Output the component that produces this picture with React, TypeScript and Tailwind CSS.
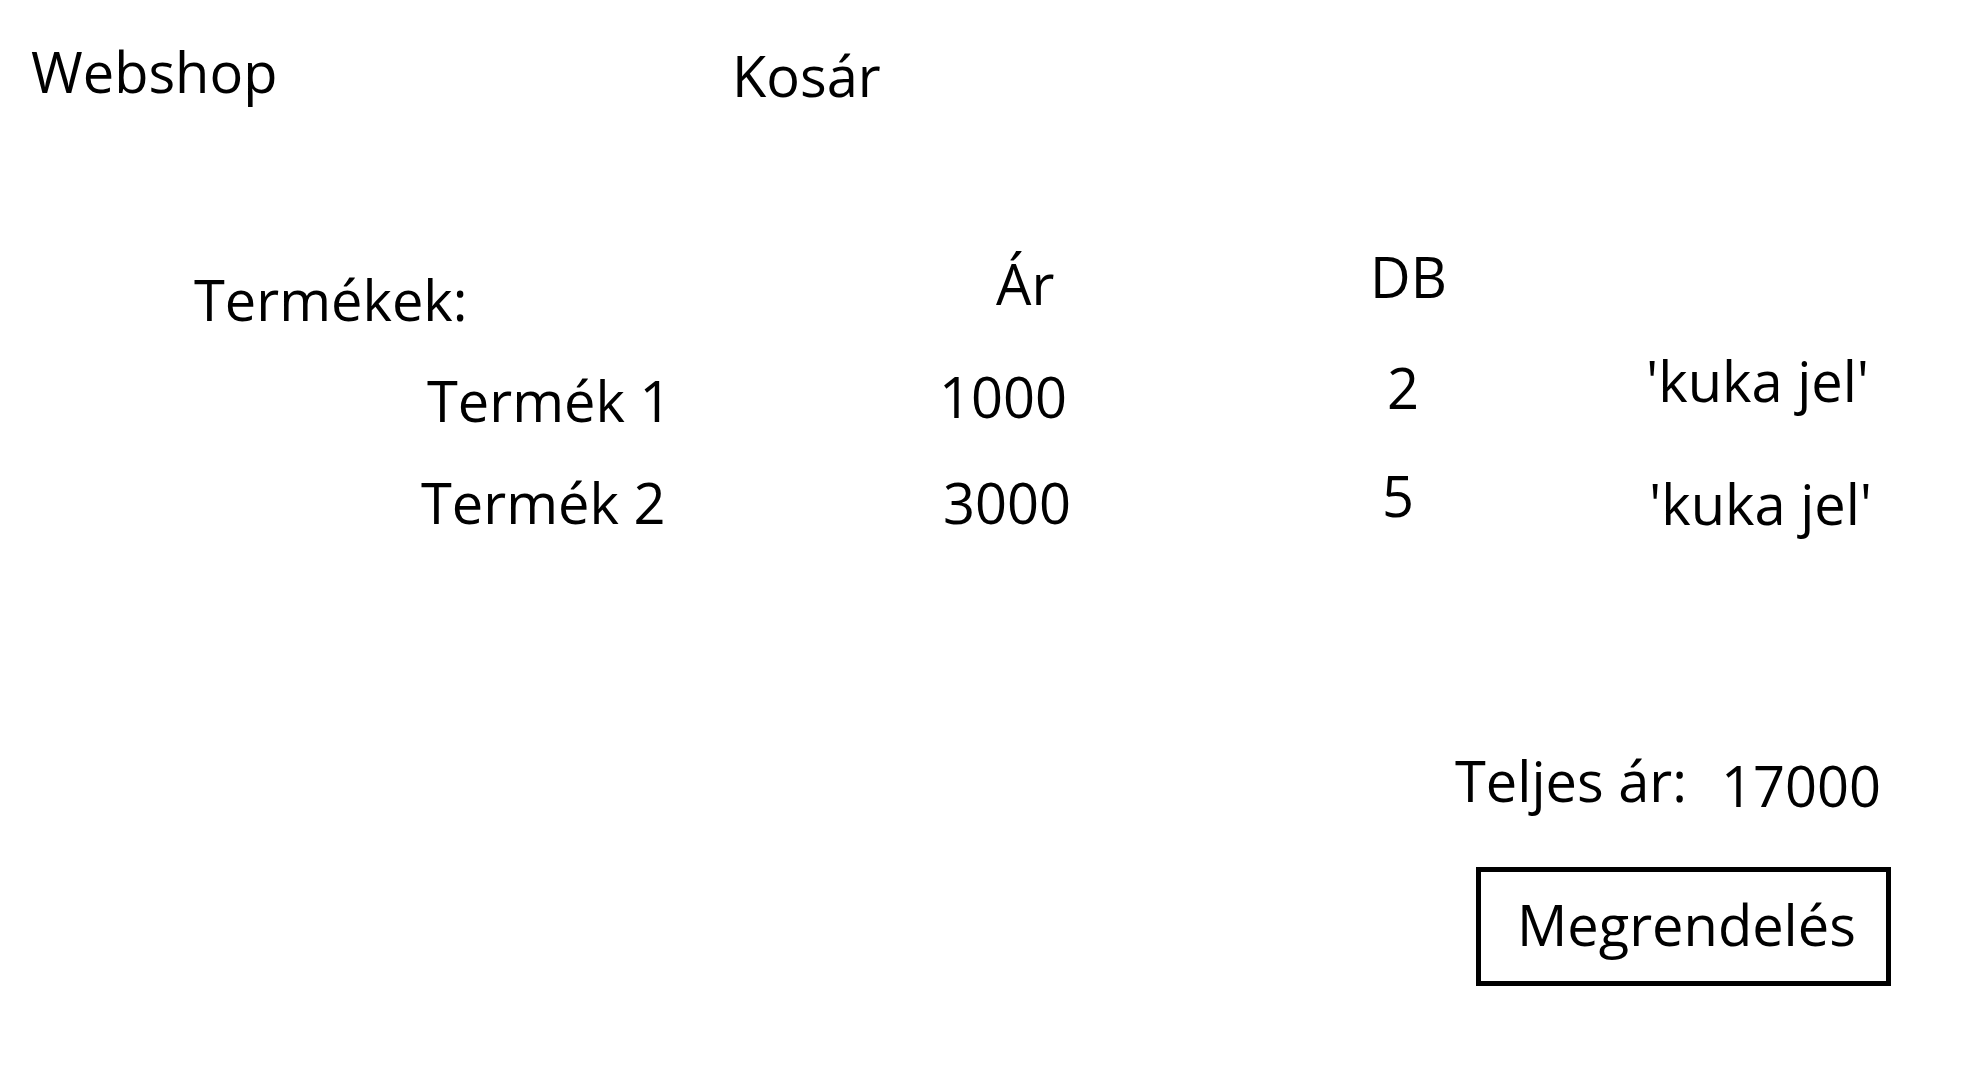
const text = "whitespace-nowrap text-[56px] font-medium leading-none text-black";

export default function App() {
  return (
    <div
      className="flex h-[1080px] w-[1980px] flex-col overflow-hidden bg-white"
      style={{ fontFamily: '"Open Sans", "Noto Sans", sans-serif' }}
    >
      {/* header */}
      <div className="flex h-[248px] shrink-0 items-start pl-[31px]">
        <div className="w-[701px] shrink-0">
          <p className={`mt-[43px] ${text}`}>Webshop</p>
        </div>
        <p className={`mt-[47px] ${text}`}>Kosár</p>
      </div>

      {/* column titles */}
      <div className="flex h-[104px] shrink-0 items-start pl-[194px]">
        <div className="w-[802px] shrink-0">
          <p className={`mt-[23px] ${text}`}>Termékek:</p>
        </div>
        <div className="w-[374px] shrink-0">
          <p className={`mt-[7px] ${text}`}>Ár</p>
        </div>
        <p className={text}>DB</p>
      </div>

      {/* product 1 */}
      <div className="flex h-[115px] shrink-0 items-start pl-[427px]">
        <div className="w-[512px] shrink-0">
          <p className={`mt-[20px] ${text}`}>Termék 1</p>
        </div>
        <div className="w-[448px] shrink-0">
          <p className={`mt-[16px] ${text}`}>1000</p>
        </div>
        <div className="w-[259px] shrink-0">
          <p className={`mt-[7px] ${text}`}>2</p>
        </div>
        <p className={text}>'kuka jel'</p>
      </div>

      {/* product 2 */}
      <div className="flex h-[285px] shrink-0 items-start pl-[421px]">
        <div className="w-[522px] shrink-0">
          <p className={`mt-[7px] ${text}`}>Termék 2</p>
        </div>
        <div className="w-[439px] shrink-0">
          <p className={`mt-[7px] ${text}`}>3000</p>
        </div>
        <div className="w-[267px] shrink-0">
          <p className={text}>5</p>
        </div>
        <p className={`mt-[8px] ${text}`}>'kuka jel'</p>
      </div>

      {/* total */}
      <div className="flex h-[115px] shrink-0 items-start pl-[1455px]">
        <div className="w-[266px] shrink-0">
          <p className={text}>Teljes ár:</p>
        </div>
        <p className={`mt-[5px] ${text}`}>17000</p>
      </div>

      {/* order button */}
      <div className="flex shrink-0 pl-[1476px]">
        <button className="flex h-[119px] w-[415px] items-start border-[5px] border-black bg-white pl-[36px] pt-[24px]">
          <span className={text}>Megrendelés</span>
        </button>
      </div>
    </div>
  );
}
